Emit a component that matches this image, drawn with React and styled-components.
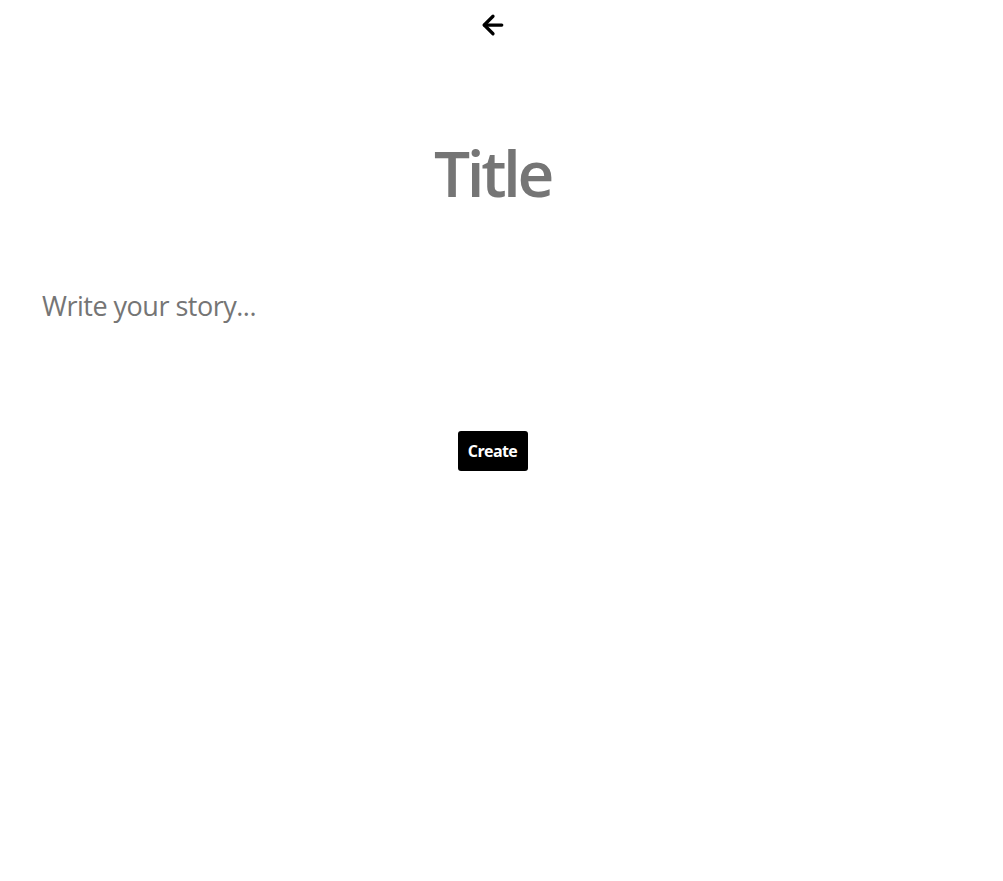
import React, { useState } from "react";
import styled, { createGlobalStyle } from "styled-components";
import { ArrowLeft } from "lucide-react";

const GlobalStyle = createGlobalStyle`
  body {
    margin: 0;
    background: #fff;
    font-family: "Open Sans", "Noto Sans", sans-serif;
  }
  * {
    box-sizing: border-box;
  }
`;

export default function App() {
  const [title, setTitle] = useState("");
  const [story, setStory] = useState("");

  return (
    <>
      <GlobalStyle />
      <Page>
        <BackButton aria-label="Back">
          <ArrowLeft size={30} strokeWidth={2.6} />
        </BackButton>
        <TitleInput
          placeholder="Title"
          value={title}
          onChange={(e) => setTitle(e.target.value)}
        />
        <StoryInput
          placeholder="Write your story..."
          value={story}
          onChange={(e) => setStory(e.target.value)}
        />
        <CreateButton>Create</CreateButton>
      </Page>
    </>
  );
}

const Page = styled.div`
  display: flex;
  flex-direction: column;
  align-items: center;
  width: calc(100% - 18px);
  padding: 10px 30px;
`;

const BackButton = styled.button`
  display: flex;
  align-items: center;
  justify-content: center;
  background: none;
  border: none;
  padding: 0;
  width: 30px;
  height: 30px;
  color: #000;
  cursor: pointer;
`;

const TitleInput = styled.input`
  margin-top: 88px;
  width: 100%;
  border: none;
  outline: none;
  text-align: center;
  font-family: "Open Sans", sans-serif;
  font-size: 64px;
  font-weight: 600;
  letter-spacing: -3.4px;
  color: #757575;
  &::placeholder {
    color: #757575;
  }
`;

const StoryInput = styled.textarea`
  margin-top: 70px;
  width: 100%;
  height: 110px;
  border: none;
  outline: none;
  resize: none;
  padding: 0 12px;
  font-family: "Open Sans", sans-serif;
  font-size: 27px;
  letter-spacing: -0.5px;
  color: #757575;
  &::placeholder {
    color: #757575;
  }
`;

const CreateButton = styled.button`
  margin-top: 34px;
  width: 70px;
  height: 40px;
  border: none;
  border-radius: 3px;
  background: #000;
  color: #fff;
  font-family: "Open Sans", sans-serif;
  font-size: 16px;
  font-weight: 700;
  letter-spacing: -0.6px;
  cursor: pointer;
`;
